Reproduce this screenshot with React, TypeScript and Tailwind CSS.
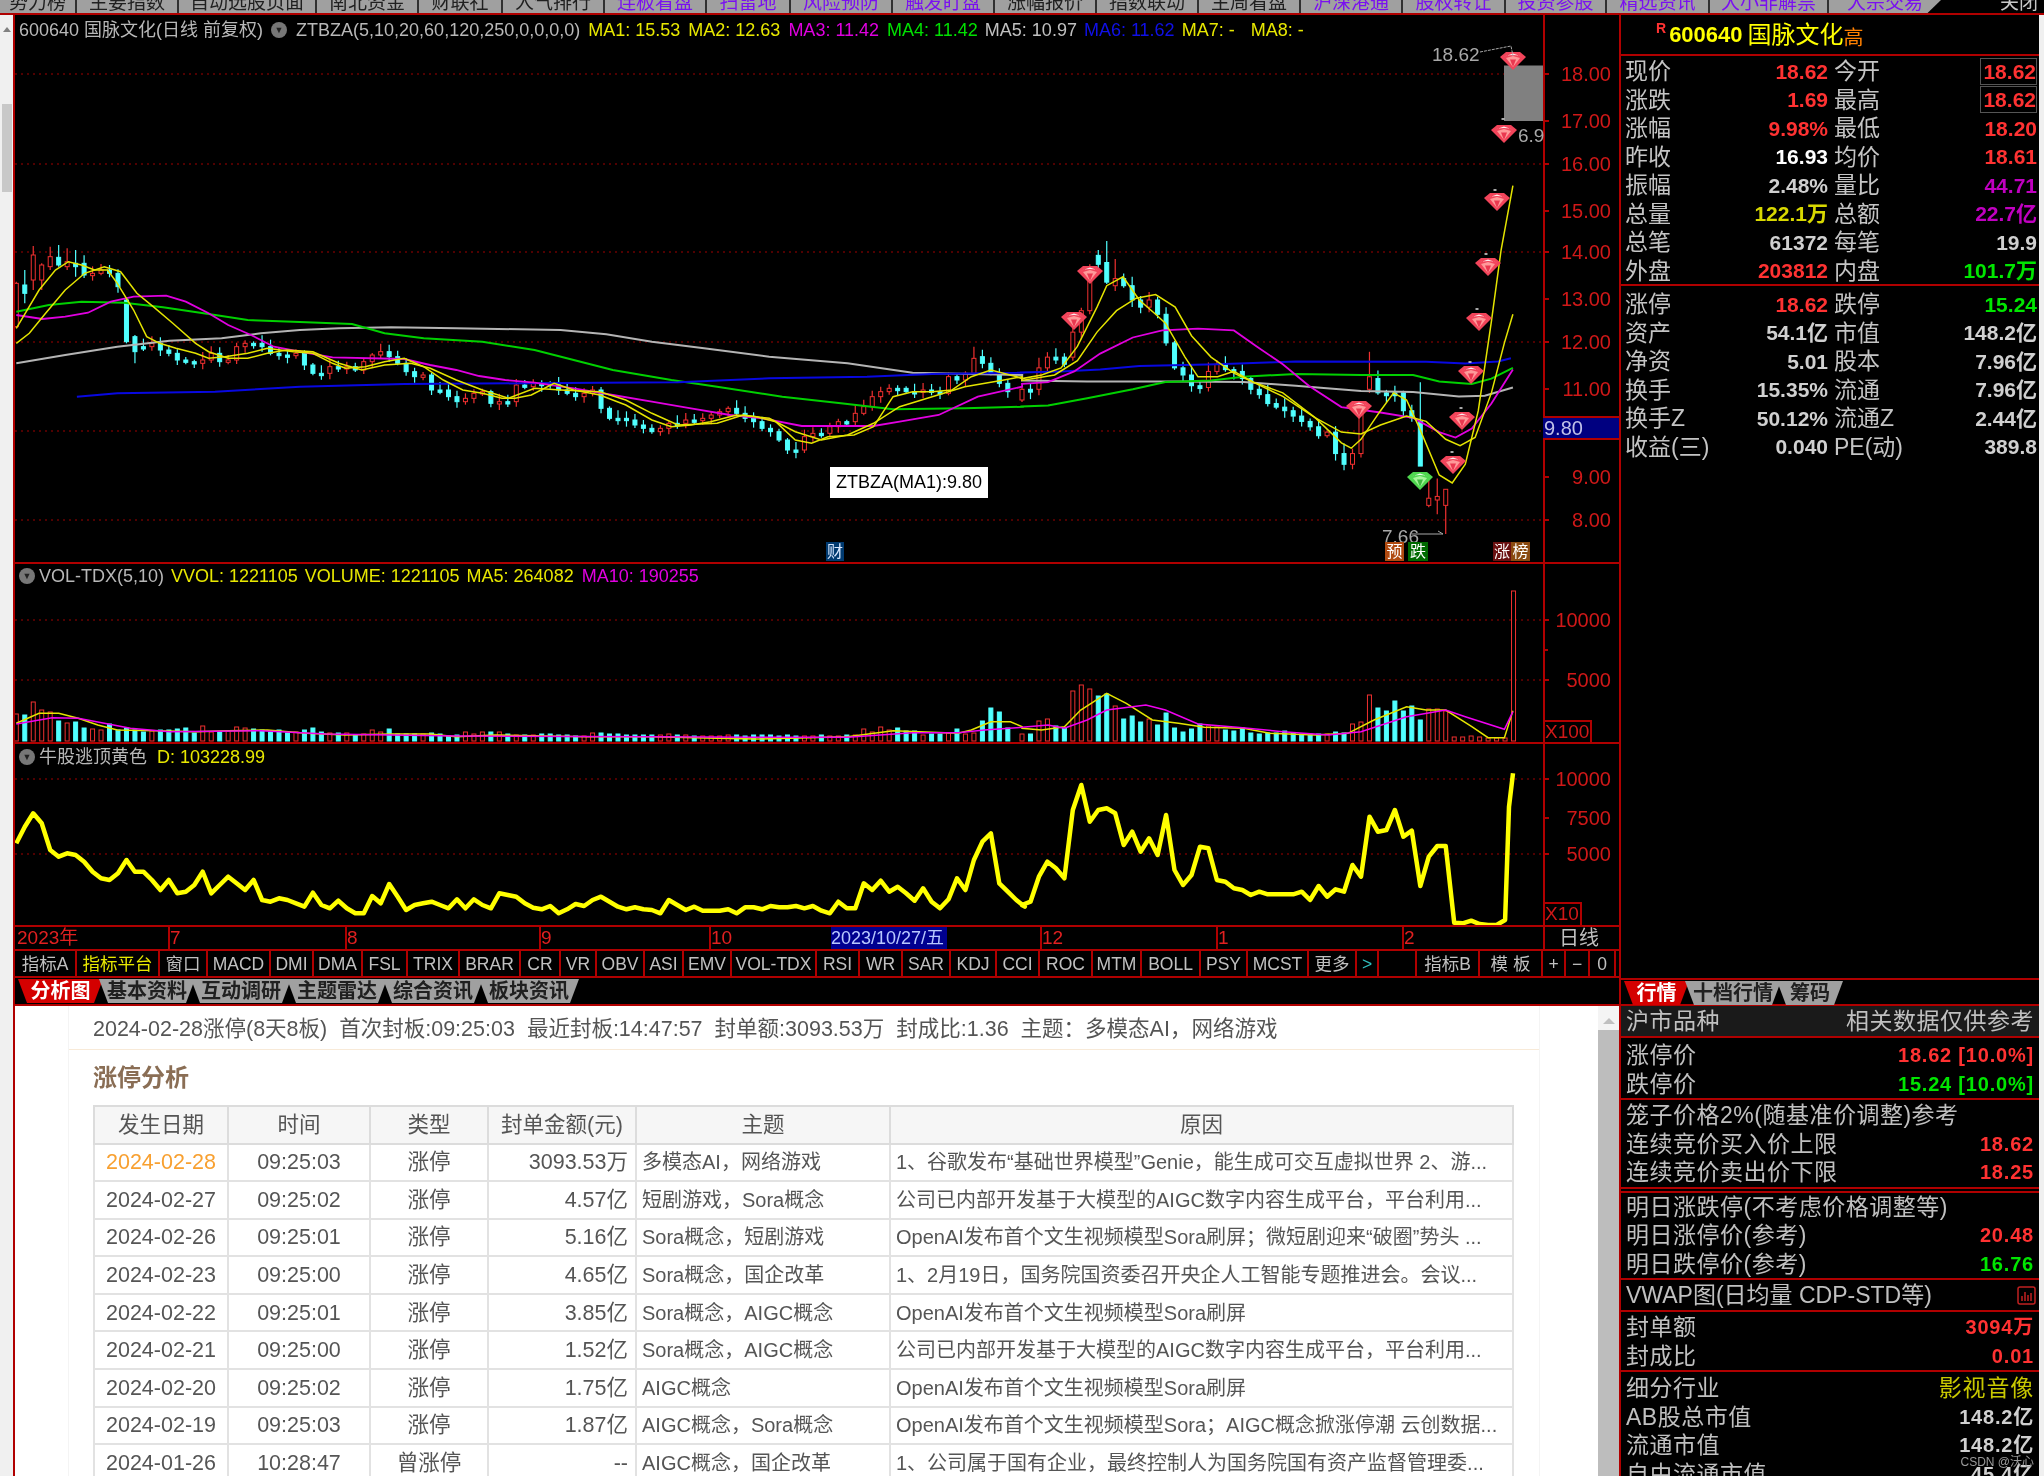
import React from "react";

const CJK = "font-['Liberation_Sans','Noto_Sans_CJK_SC',sans-serif]";
const RED = "#b00000";

type P = [number, number];
const L = (a: number[]): P[] => { const o: P[] = []; for (let i = 0; i < a.length; i += 2) o.push([a[i] / 1.534, a[i + 1] / 3]); return o; };
const R = (a: number[]): P[] => { const o: P[] = []; for (let i = 0; i < a.length; i += 2) o.push([1022 + a[i] / 1.534, a[i + 1] / 2.8]); return o; };
const pts = (p: P[]) => p.map(([x, y]) => `${x.toFixed(1)},${y.toFixed(1)}`).join(" ");

const ma1 = [...L([25,985,60,870,85,810,105,785,125,795,145,810,165,810,180,850,205,930,225,1010,245,1030,270,1045,300,1060,320,1075,345,1070,380,1060,410,1045,430,1050,450,1055,480,1060,510,1090,530,1105,560,1100,590,1085,620,1075,650,1100,680,1140,710,1170,740,1180,770,1195,790,1195,815,1185,850,1150,880,1170,920,1185,960,1215,1000,1260,1030,1280,1060,1275,1090,1265,1130,1245,1160,1250,1190,1265,1220,1320,1245,1330,1270,1310,1310,1305,1340,1280,1370,1190,1400,1175,1430,1175,1460,1170,1490,1130,1520,1110,1560,1130]),
  ...R([0,1060,30,1050,60,1030,85,970,115,860,130,800,155,775,180,840,205,880,220,905,250,1000,270,1055,300,1055,325,1040,355,1070,400,1100,450,1170,490,1240,505,1255,520,1230,550,1150,570,1100,590,1120,610,1200,640,1330,660,1352,680,1300,700,1150,720,900,735,700,753,520])];
const ma2 = [...L([25,1030,45,1000,70,940,100,870,130,820,160,800,185,815,210,880,235,920,265,970,300,1030,320,1055,350,1075,380,1075,410,1060,440,1050,480,1055,520,1090,555,1110,590,1095,630,1090,660,1105,700,1140,740,1170,780,1195,820,1165,860,1170,920,1175,960,1200,1000,1240,1040,1275,1100,1270,1140,1245,1180,1255,1220,1295,1260,1320,1300,1305,1340,1270,1380,1220,1430,1190,1480,1160,1540,1140,1568,1130]),
  ...R([0,1065,50,1050,85,1010,115,930,145,870,175,835,205,825,235,860,260,940,290,1000,325,1045,360,1075,400,1110,450,1170,490,1210,520,1215,550,1190,590,1165,620,1180,650,1230,672,1248,695,1225,720,1100,740,960,753,880])];
const ma3 = [...L([25,945,65,957,100,950,135,938,170,905,205,890,255,887,285,905,320,940,350,975,385,1005,420,1040,460,1055,510,1072,620,1077,660,1095,700,1110,735,1128,775,1140,820,1148,880,1165,940,1185,1000,1205,1060,1225,1120,1245,1170,1255,1230,1278,1340,1278,1380,1265,1440,1245,1500,1190,1568,1160]),
  ...R([0,1075,40,1070,80,1040,120,990,170,945,215,925,270,920,325,925,360,970,400,1020,440,1080,490,1140,550,1155,600,1170,640,1210,665,1225,690,1200,720,1130,753,1035])];
const ma4 = [...L([25,935,75,915,125,905,190,908,250,922,320,942,380,960,470,967,540,972,590,1000,650,1015,740,1025,820,1050,880,1080,940,1110,1030,1140,1100,1160,1200,1190,1290,1210,1370,1228,1480,1225,1568,1220]),
  ...R([0,1138,40,1135,100,1115,170,1090,220,1070,290,1065,340,1055,420,1047,520,1050,600,1050,640,1068,690,1075,720,1060,753,1030])];
const ma5 = [...L([25,1090,100,1065,180,1040,260,1022,340,1015,400,1000,460,990,520,985,600,982,700,985,860,990,930,1003,1000,1025,1080,1045,1180,1070,1300,1090,1400,1118,1568,1125]),
  ...R([0,1065,100,1068,240,1068,340,1070,420,1080,520,1095,600,1098,670,1110,710,1108,753,1085])];
const ma6 = [...L([118,1190,180,1180,330,1175,460,1160,620,1152,800,1150,1040,1147,1180,1135,1330,1130,1430,1122,1568,1118]),
  ...R([0,1043,60,1040,120,1035,180,1025,300,1020,420,1012,620,1013,680,1018,730,1012,750,1003])];

const leftC = [920,860,790,810,785,780,790,790,825,820,810,820,860,960,1040,1040,1030,1050,1060,1080,1085,1090,1080,1060,1085,1080,1040,1030,1030,1040,1060,1065,1065,1060,1095,1120,1120,1100,1105,1100,1110,1085,1065,1055,1070,1090,1115,1130,1125,1170,1170,1190,1205,1195,1180,1175,1210,1205,1205,1155,1160,1150,1150,1155,1170,1180,1190,1180,1170,1225,1255,1255,1260,1275,1285,1295,1285,1270,1270,1260,1260,1255,1245,1235,1225,1240,1255,1265,1285,1295,1320,1350,1350,1310,1300,1300,1280,1265,1265,1240,1220,1190,1175,1165,1165,1175,1175,1170,1175,1180,1130,1140,1120,1070,1090,1120,1150,1175];
const rightC = [1090,1090,1030,1000,1000,1020,930,870,800,730,740,780,800,840,860,840,880,960,1030,1050,1080,1085,1040,1020,1035,1040,1060,1090,1105,1130,1140,1150,1165,1180,1195,1220,1210,1270,1300,1270,1150,1060,1100,1100,1100,1150,1170,1230,1400,1380,1400];
const over: Record<number, number[]> = { 47: [1180, 1305, 1070, 1305, 0], 48: [1395, 1415, 1340, 1420, 1], 49: [1390, 1400, 1340, 1440, 1], 50: [1370, 1415, 1370, 1495, 1], 41: [1055, 1090, 985, 1100, 1], 6: [930, 1000, 890, 1010, 1], 8: [780, 870, 740, 880, 1], 9: [715, 740, 700, 770, 0], 10: [735, 790, 675, 795, 0], 11: [780, 800, 725, 815, 1] };
const overL: Record<number, number[]> = { 0: [850, 980, 845, 985, 1], 1: [855, 880, 810, 910, 0], 2: [765, 840, 738, 870, 1], 3: [795, 840, 790, 870, 1], 4: [770, 800, 740, 810, 1], 5: [772, 795, 735, 800, 0], 6: [785, 800, 745, 810, 1], 7: [790, 800, 750, 830, 0], 13: [900, 1025, 895, 1030, 0], 14: [1010, 1055, 1005, 1090, 0], 113: [1075, 1120, 1040, 1125, 1] };

type C = { x: number; top: number; bot: number; hi: number; lo: number; up: boolean };
const candles: C[] = [];
leftC.forEach((c, i) => {
  const p = i ? leftC[i - 1] : c + 40;
  const o = overL[i];
  const up = o ? o[4] === 1 : c < p;
  const t = o ? o[0] : Math.min(c, p), b = o ? o[1] : Math.max(Math.max(c, p), t + 7);
  candles.push({ x: (25 + 13 * i) / 1.534, top: t / 3, bot: b / 3, hi: o ? o[2] / 3 : t / 3 - ((i * 13) % 7) - 2, lo: o ? o[3] / 3 : b / 3 + ((i * 17) % 5) + 2, up });
});
rightC.forEach((c, j) => {
  const p = j ? rightC[j - 1] : c + 30;
  const o = over[j];
  const up = o ? o[4] === 1 : c < p;
  const t = o ? o[0] : Math.min(c, p), b = o ? o[1] : Math.max(Math.max(c, p), t + 8);
  candles.push({ x: 1022 + (13 * j) / 1.534, top: t / 2.8, bot: b / 2.8, hi: o ? o[2] / 2.8 : t / 2.8 - ((j * 13) % 9) - 2, lo: o ? o[3] / 2.8 : b / 2.8 + ((j * 17) % 6) + 2, up });
});

const volL = [27,26,39,31,29,20,18,19,13,12,11,17,11,13,11,9,10,11,11,12,13,8,15,9,9,10,14,13,12,11,9,11,8,9,11,13,9,8,8,8,6,7,11,9,12,7,7,7,7,8,7,5,6,9,7,9,9,9,7,6,6,6,7,7,6,6,5,5,8,8,7,7,6,6,6,6,6,7,6,6,5,5,5,5,6,6,5,6,6,6,5,6,5,5,5,6,5,5,6,6,12,9,14,11,13,10,10,6,7,7,8,12,7,8,20,33,29,13,12,8];
const volR = [7,7,20,22,15,13,50,56,52,45,47,35,22,25,19,22,16,28,13,9,12,17,15,14,11,10,13,8,7,8,8,10,8,7,7,7,7,9,8,17,19,46,33,30,40,30,35,21,32,32,30,4,4,5,4,3,3,3,150];
const vols = [...leftC.map((_, i) => ({ x: (25 + 13 * i) / 1.534, h: volL[i] ?? 6, up: candles[i].up })), ...volR.map((h, j) => ({ x: 1022 + (13 * j) / 1.534, h, up: j < rightC.length ? candles[leftC.length + j].up : true }))];

const volMa5 = [...L([25,550,60,520,90,520,120,535,150,555,180,570,240,572,300,575,350,572,410,570,470,580,530,585,600,582,660,582,700,590,760,585,900,590,1000,590,1100,595,1160,597,1300,590,1370,572,1470,580,1490,570,1520,545,1550,545,1568,560]).map(([x, y]): P => [x, y + 540]),
  ...[0,565,30,570,65,560,90,510,130,460,160,490,200,540,240,550,280,562,340,565,380,580,450,585,500,580,540,540,590,500,620,510,650,510,690,560,715,593,740,593,753,512].reduce<P[]>((o, v, i, a) => i % 2 ? o : [...o, [1022 + v / 1.534, 540 + a[i + 1] / 3]], [])];
const volMa10 = [...L([25,552,80,533,120,535,160,550,200,565,260,575,400,572,500,582,700,588,1000,590,1160,592,1300,592,1400,578,1470,578,1510,570,1568,562]).map(([x, y]): P => [x, y + 540]),
  ...[0,562,40,555,65,565,100,540,130,510,190,495,220,510,270,552,330,562,400,575,470,585,520,575,590,530,650,510,680,530,740,568,753,515].reduce<P[]>((o, v, i, a) => i % 2 ? o : [...o, [1022 + v / 1.534, 540 + a[i + 1] / 3]], [])];

const subL = [910,860,820,850,930,950,940,945,965,995,1015,1020,1000,960,995,995,1020,1050,1020,1060,1055,1035,995,1060,1035,1010,1030,1050,1020,1080,1085,1075,1080,1090,1100,1058,1095,1105,1082,1105,1120,1120,1068,1090,1032,1070,1110,1095,1090,1085,1095,1105,1078,1105,1078,1095,1105,1060,1065,1070,1090,1103,1108,1098,1120,1108,1092,1098,1080,1070,1085,1100,1108,1102,1108,1110,1120,1080,1095,1110,1100,1112,1112,1112,1108,1120,1102,1102,1108,1098,1102,1102,1098,1105,1098,1112,1120,1085,1105,1105,1030,1050,1022,1055,1040,1060,1082,1045,1085,1105,1078,1015,1050,960,905,880,1030,1055,1080,1100];
const subR = [1095,1085,1010,965,985,1015,810,735,845,810,805,820,915,875,935,895,945,825,990,1035,1005,920,925,1020,1025,1045,1050,1065,1055,1063,1063,1063,1063,1055,1080,1038,1070,1048,1055,975,1010,830,875,870,810,890,872,1038,950,918,918,1148,1150,1142,1152,1155,1155,1140];
const subLine: P[] = [...subL.map((y, i): P => [(25 + 13 * i) / 1.534, 540 + y / 3]), ...subR.map((y, j): P => [1022 + (13 * j) / 1.534, 540 + y / 3]), [1022 + 747 / 1.534, 540 + 800 / 3], [1513, 540 + 700 / 3]];

const Diamond = ({ x, y, green }: { x: number; y: number; green?: boolean }) => {
  const a = green ? "#4fd64f" : "#f2445a";
  const b = green ? "#a6f59a" : "#ff9a9a";
  const c = green ? "#3fb83f" : "#ea3850";
  return (
    <g>
      <polygon points={`${x - 13},${y + 5} ${x - 7},${y} ${x + 7},${y} ${x + 13},${y + 5} ${x},${y + 18}`} fill={a} />
      <polygon points={`${x - 10},${y + 5} ${x},${y + 1.5} ${x + 10},${y + 5} ${x + 6},${y + 3.5} ${x},${y + 3} ${x - 6},${y + 3.5}`} fill="#fff" opacity={0.9} />
      <polygon points={`${x - 7},${y + 6} ${x},${y + 4} ${x + 7},${y + 6} ${x},${y + 15}`} fill={b} />
      <polygon points={`${x - 3},${y + 7.5} ${x + 3},${y + 7.5} ${x},${y + 15}`} fill={c} />
    </g>
  );
};

const Dots = ({ y }: { y: number }) => <line x1={15} x2={1543} y1={y} y2={y} stroke="#a00000" strokeWidth={1} strokeDasharray="2 4" />;
const Axis = ({ y, t }: { y: number; t: string }) => (
  <g>
    <line x1={1543} x2={1549} y1={y} y2={y} stroke={RED} strokeWidth={2} />
    <text x={1611} y={y + 7} textAnchor="end" fill="#d01818" fontSize={20} fontFamily="Liberation Sans">{t}</text>
  </g>
);

const topTabs: [string, number, boolean][] = [
  ["势力榜", 77, false], ["主要指数", 102, false], ["自动选股页面", 138, false], ["南北资金", 102, false], ["财联社", 84, false], ["人气排行", 102, false],
  ["连板看盘", 102, true], ["扫雷地", 84, true], ["风险预防", 102, true], ["触发盯盘", 102, true], ["涨幅报价", 102, false], ["指数联动", 102, false], ["主周看盘", 102, false],
  ["沪深港通", 102, true], ["股权转让", 103, true], ["投资参股", 101, true], ["精选资讯", 103, true], ["大小非解禁", 119, true],
];

const infoA: [string, string, string, string, string, string][] = [
  ["现价", "18.62", "text-[#ff3232]", "今开", "18.62", "text-[#ff3232]"],
  ["涨跌", "1.69", "text-[#ff3232]", "最高", "18.62", "text-[#ff3232]"],
  ["涨幅", "9.98%", "text-[#ff3232]", "最低", "18.20", "text-[#ff3232]"],
  ["昨收", "16.93", "text-white", "均价", "18.61", "text-[#ff3232]"],
  ["振幅", "2.48%", "text-[#d0d0d0]", "量比", "44.71", "text-[#c000c0]"],
  ["总量", "122.1万", "text-[#d8d800]", "总额", "22.7亿", "text-[#c000c0]"],
  ["总笔", "61372", "text-[#d0d0d0]", "每笔", "19.9", "text-[#d0d0d0]"],
  ["外盘", "203812", "text-[#ff3232]", "内盘", "101.7万", "text-[#00e600]"],
];
const infoB: [string, string, string, string, string, string][] = [
  ["涨停", "18.62", "text-[#ff3232]", "跌停", "15.24", "text-[#00e600]"],
  ["资产", "54.1亿", "text-[#d0d0d0]", "市值", "148.2亿", "text-[#d0d0d0]"],
  ["净资", "5.01", "text-[#d0d0d0]", "股本", "7.96亿", "text-[#d0d0d0]"],
  ["换手", "15.35%", "text-[#d0d0d0]", "流通", "7.96亿", "text-[#d0d0d0]"],
  ["换手Z", "50.12%", "text-[#d0d0d0]", "流通Z", "2.44亿", "text-[#d0d0d0]"],
  ["收益(三)", "0.040", "text-[#d0d0d0]", "PE(动)", "389.8", "text-[#d0d0d0]"],
];

const InfoRow = ({ r, box }: { r: string[]; box: boolean }) => (
  <div className="grid h-[28.5px] grid-cols-[207px_1fr] items-center">
    <div className="flex items-center justify-between pl-[4px]">
      <span className="text-[23px] text-[#c4c4c4] whitespace-nowrap">{r[0]}</span>
      <span className={`text-[21px] font-bold ${r[2]}`}>{r[1]}</span>
    </div>
    <div className="flex items-center justify-between pl-[6px] pr-[2px]">
      <span className="text-[23px] text-[#c4c4c4] whitespace-nowrap">{r[3]}</span>
      <span className={`text-[21px] font-bold ${r[5]} ${box ? "border border-[#555] pl-[2px] leading-[25px]" : ""}`}>{r[4]}</span>
    </div>
  </div>
);

const btnsA: [string, number, string][] = [
  ["指标A", 62, ""], ["指标平台", 83, "text-[#e8e800]"], ["窗口", 48, ""], ["MACD", 63, ""], ["DMI", 43, ""], ["DMA", 49, ""], ["FSL", 45, ""], ["TRIX", 52, ""], ["BRAR", 61, ""], ["CR", 40, ""], ["VR", 36, ""], ["OBV", 48, ""], ["ASI", 39, ""], ["EMV", 48, ""], ["VOL-TDX", 85, ""], ["RSI", 43, ""], ["WR", 43, ""], ["SAR", 48, ""], ["KDJ", 46, ""], ["CCI", 43, ""], ["ROC", 53, ""], ["MTM", 49, ""], ["BOLL", 59, ""], ["PSY", 47, ""], ["MCST", 61, ""], ["更多", 48, ""], [">", 22, "text-[#30c0c0]"], ["", 38, ""], ["指标B", 63, ""], ["模 板", 63, ""], ["+", 23, ""], ["−", 24, ""], ["0", 26, ""],
];

const Tab = ({ t, w, active }: { t: string; w: number; active?: boolean }) => (
  <div style={{ width: w }} className={`-mr-[4px] flex h-[24px] shrink-0 items-center justify-center font-bold text-[20px] [clip-path:polygon(0_0,100%_0,calc(100%-9px)_100%,9px_100%)] ${active ? "bg-[#d40000] text-white" : "bg-[#a0a0a0] text-[#202020]"}`}>{t}</div>
);

const rows = [
  ["2024-02-28", "09:25:03", "涨停", "3093.53万", "多模态AI，网络游戏", "1、谷歌发布“基础世界模型”Genie，能生成可交互虚拟世界 2、游..."],
  ["2024-02-27", "09:25:02", "涨停", "4.57亿", "短剧游戏，Sora概念", "公司已内部开发基于大模型的AIGC数字内容生成平台，平台利用..."],
  ["2024-02-26", "09:25:01", "涨停", "5.16亿", "Sora概念，短剧游戏", "OpenAI发布首个文生视频模型Sora刷屏；微短剧迎来“破圈”势头 ..."],
  ["2024-02-23", "09:25:00", "涨停", "4.65亿", "Sora概念，国企改革", "1、2月19日，国务院国资委召开央企人工智能专题推进会。会议..."],
  ["2024-02-22", "09:25:01", "涨停", "3.85亿", "Sora概念，AIGC概念", "OpenAI发布首个文生视频模型Sora刷屏"],
  ["2024-02-21", "09:25:00", "涨停", "1.52亿", "Sora概念，AIGC概念", "公司已内部开发基于大模型的AIGC数字内容生成平台，平台利用..."],
  ["2024-02-20", "09:25:02", "涨停", "1.75亿", "AIGC概念", "OpenAI发布首个文生视频模型Sora刷屏"],
  ["2024-02-19", "09:25:03", "涨停", "1.87亿", "AIGC概念，Sora概念", "OpenAI发布首个文生视频模型Sora；AIGC概念掀涨停潮 云创数据..."],
  ["2024-01-26", "10:28:47", "曾涨停", "--", "AIGC概念，国企改革", "1、公司属于国有企业，最终控制人为国务院国有资产监督管理委..."],
];

const Th = ({ children }: { children: React.ReactNode }) => <th className="h-[37.5px] border-2 border-[#dcdcdc] bg-[#f6f6f6] p-0 text-center font-normal">{children}</th>;

const KV = ({ k, v, c }: { k: string; v?: string; c?: string }) => (
  <div className="flex h-[28.5px] items-center justify-between pl-[5px] pr-[5px]">
    <span className="text-[23px] tracking-[0.5px] text-[#c0c0c0] whitespace-nowrap">{k}</span>
    {v ? <span className={`text-[20px] font-bold tracking-[0.8px] ${c ?? "text-[#d0d0d0]"}`}>{v}</span> : null}
  </div>
);

export default function App() {
  return (
    <div className={`${CJK} relative flex h-[1476px] w-[2044px] flex-col overflow-hidden bg-[#f0f0f0] blur-[0.5px]`}>
      {/* top tab strip */}
      <div className="flex h-[15px] shrink-0 border-b-2 border-[#b00000] bg-black">
        {topTabs.map(([t, w, p]) => (
          <div key={t} style={{ width: w }} className={`h-[13px] shrink-0 overflow-hidden border-r-2 border-[#303030] bg-[#a0a0a0] text-center text-[19px] leading-[5px] whitespace-nowrap ${p ? "text-[#7a10f0]" : "text-[#202020]"}`}>{t}</div>
        ))}
        <div className="h-[13px] w-[112px] shrink-0 overflow-hidden bg-[#a0a0a0] text-center text-[19px] leading-[5px] text-[#7a10f0] [clip-path:polygon(0_0,100%_0,88%_100%,0_100%)]">大宗交易</div>
        <div className="flex h-[13px] flex-1 justify-end overflow-hidden pr-[6px] text-[19px] leading-[5px] text-[#c8c8c8]">关闭</div>
      </div>

      <div className="flex min-h-0 flex-1">
        {/* left scroll strip */}
        <div className="flex w-[13px] shrink-0 flex-col items-center bg-[#f0f0f0]">
          <div className="mt-[12px] h-0 w-0 border-x-[4px] border-b-[5px] border-x-transparent border-b-[#808080]" />
          <div className="mt-[72px] h-[88px] w-[10px] bg-[#c8c8c8]" />
        </div>

        {/* center column */}
        <div className="flex w-[1606px] shrink-0 flex-col border-l-2 border-[#b00000] bg-black">
          {/* main chart */}
          <div className="relative flex h-[549px] shrink-0 border-b-2 border-[#b00000]">
            <div className="flex-1" />
            <div className="w-[76px] shrink-0 border-l-2 border-[#b00000]" />
            <svg className="absolute inset-0 h-full w-full" viewBox="15 15 1604 547">
              {[74, 164, 252, 342, 431, 520].map((y) => <Dots key={y} y={y} />)}
              <rect x={1504} y={65.5} width={39} height={55.5} fill="#808080" />
              {[["18.00", 74], ["17.00", 121], ["16.00", 164], ["15.00", 211], ["14.00", 252], ["13.00", 299], ["12.00", 342], ["11.00", 389], ["9.00", 477], ["8.00", 520]].map(([t, y]) => <Axis key={t as string} t={t as string} y={y as number} />)}
              {candles.map((c, i) => (
                <g key={i}>
                  <line x1={c.x} x2={c.x} y1={c.hi} y2={c.lo} stroke={c.up ? "#f03030" : "#50ffff"} strokeWidth={1.2} />
                  <rect x={c.x - 2} y={c.top} width={4} height={Math.max(c.bot - c.top, 2)} fill={c.up ? "#000" : "#50ffff"} stroke={c.up ? "#f03030" : "#50ffff"} strokeWidth={1} />
                </g>
              ))}
              <polyline points={pts(ma5)} fill="none" stroke="#b4b4b4" strokeWidth={2} />
              <polyline points={pts(ma4)} fill="none" stroke="#00d000" strokeWidth={2} />
              <polyline points={pts(ma6)} fill="none" stroke="#0808e0" strokeWidth={2} />
              <polyline points={pts(ma3)} fill="none" stroke="#e000e0" strokeWidth={1.8} />
              <polyline points={pts(ma2)} fill="none" stroke="#e4e400" strokeWidth={1.5} />
              <polyline points={pts(ma1)} fill="none" stroke="#e4e400" strokeWidth={1.5} />
              {[[1513, 52], [1504, 125], [1497, 193], [1488, 258], [1479, 313], [1471, 366], [1462, 412], [1453, 456], [1359, 401], [1090, 266], [1074, 312]].map(([x, y]) => <Diamond key={x} x={x} y={y} />)}
              <Diamond x={1420} y={472} green />
              {[[1503, 119], [1495, 190], [1486, 254], [1477, 309], [1470, 362], [1461, 408], [1452, 452]].map(([x, y]) => <line key={x} x1={x - 1.5} x2={x + 1.5} y1={y} y2={y} stroke="#e0e0e0" strokeWidth={1.5} />)}
              <text x={1432} y={61} fill="#a8a8a8" fontSize={19} fontFamily="Liberation Sans">18.62</text>
              <polyline points="1480,52 1511,46 1513,56" fill="none" stroke="#a8a8a8" strokeWidth={1} strokeDasharray="3 1" />
              <text x={1518} y={142} fill="#a8a8a8" fontSize={19} fontFamily="Liberation Sans">6.9</text>
              <text x={1382} y={543} fill="#a8a8a8" fontSize={19} fontFamily="Liberation Sans">7.66</text>
              <polyline points="1412,534 1443,534 1438,531" fill="none" stroke="#a8a8a8" strokeWidth={1} />
            </svg>
            {/* chart legend */}
            <div className="absolute left-[4px] top-[5px] flex items-center whitespace-nowrap text-[18px] leading-[20px] text-[#b8b8b8]">
              <span>600640 国脉文化(日线 前复权)</span>
              <span className="ml-[8px] mr-[9px] flex h-[16px] w-[16px] items-center justify-center rounded-full bg-[#777] text-[9px] text-[#222]">▼</span>
              <span>ZTBZA(5,10,20,60,120,250,0,0,0,0)</span>
              <span className="ml-[8px] text-[#e8e800]">MA1: 15.53</span>
              <span className="ml-[8px] text-[#e8e800]">MA2: 12.63</span>
              <span className="ml-[8px] text-[#e000e0]">MA3: 11.42</span>
              <span className="ml-[8px] text-[#00e000]">MA4: 11.42</span>
              <span className="ml-[7px] text-[#c0c0c0]">MA5: 10.97</span>
              <span className="ml-[7px] text-[#1010e8]">MA6: 11.62</span>
              <span className="ml-[7px] text-[#e8e800]">MA7: -</span>
              <span className="ml-[16px] text-[#e8e800]">MA8: -</span>
            </div>
            <div className="absolute left-[1528px] top-[401px] flex h-[24px] w-[76px] items-center border-y-2 border-[#b00000] bg-[#000080] pl-[1px] text-[20px] text-[#c0c0e8]">9.80</div>
            <div className="absolute left-[815px] top-[452px] flex h-[31px] w-[158px] items-center justify-center bg-white text-[18px] text-black">ZTBZA(MA1):9.80</div>
            <div className="absolute left-[811px] top-[527px] flex h-[19px] w-[18px] items-center justify-center bg-[#003a70] text-[16px] text-[#d8e8ff]">财</div>
            <div className="absolute left-[1370px] top-[527px] flex h-[19px] w-[19px] items-center justify-center bg-[#b04a10] text-[16px] text-white">预</div>
            <div className="absolute left-[1393px] top-[527px] flex h-[19px] w-[20px] items-center justify-center bg-[#006a00] text-[16px] text-white">跌</div>
            <div className="absolute left-[1478px] top-[527px] flex h-[19px] w-[18px] items-center justify-center bg-[#6a1010] text-[16px] text-white">涨</div>
            <div className="absolute left-[1496px] top-[527px] flex h-[19px] w-[19px] items-center justify-center bg-[#8a4a10] text-[16px] text-white">榜</div>
          </div>

          {/* volume */}
          <div className="relative flex h-[180px] shrink-0 border-b-2 border-[#b00000]">
            <div className="flex-1" />
            <div className="w-[76px] shrink-0 border-l-2 border-[#b00000]" />
            <svg className="absolute inset-0 h-full w-full" viewBox="15 564 1604 178">
              <Dots y={620} />
              <Dots y={680} />
              <Axis y={620} t="10000" />
              <Axis y={680} t="5000" />
              <line x1={1543} x2={1548} y1={650} y2={650} stroke={RED} strokeWidth={2} />
              {vols.map((v, i) => (
                <rect key={i} x={v.x - 2} y={741 - v.h} width={4} height={v.h} fill={v.up ? "#000" : "#50ffff"} stroke={v.up ? "#f03030" : "#50ffff"} strokeWidth={1} />
              ))}
              <polyline points={pts(volMa5)} fill="none" stroke="#e4e400" strokeWidth={1.5} />
              <polyline points={pts(volMa10)} fill="none" stroke="#f000f0" strokeWidth={1.5} />
            </svg>
            <div className="absolute left-[4px] top-[2px] flex items-center whitespace-nowrap text-[18px] leading-[20px] text-[#b8b8b8]">
              <span className="mr-[4px] flex h-[16px] w-[16px] items-center justify-center rounded-full bg-[#777] text-[9px] text-[#222]">▼</span>
              <span>VOL-TDX(5,10)</span>
              <span className="ml-[7px] text-[#e8e800]">VVOL: 1221105</span>
              <span className="ml-[7px] text-[#e8e800]">VOLUME: 1221105</span>
              <span className="ml-[7px] text-[#e8e800]">MA5: 264082</span>
              <span className="ml-[8px] text-[#e000e0]">MA10: 190255</span>
            </div>
            <div className="absolute bottom-0 left-[1528px] flex h-[22px] w-[49px] items-center border-l-2 border-r-2 border-t-2 border-[#b00000] text-[19px] text-[#d01818]">X100</div>
          </div>

          {/* indicator */}
          <div className="relative flex h-[183px] shrink-0 border-b-2 border-[#b00000]">
            <div className="flex-1" />
            <div className="w-[76px] shrink-0 border-l-2 border-[#b00000]" />
            <svg className="absolute inset-0 h-full w-full" viewBox="15 744 1604 181">
              <Dots y={779} />
              <Dots y={854} />
              <Axis y={779} t="10000" />
              <Axis y={818} t="7500" />
              <Axis y={854} t="5000" />
              <polyline points={pts(subLine)} fill="none" stroke="#ffff00" strokeWidth={4.5} strokeLinejoin="round" />
            </svg>
            <div className="absolute left-[4px] top-[3px] flex items-center whitespace-nowrap text-[18px] leading-[20px] text-[#b8b8b8]">
              <span className="mr-[4px] flex h-[16px] w-[16px] items-center justify-center rounded-full bg-[#777] text-[9px] text-[#222]">▼</span>
              <span>牛股逃顶黄色</span>
              <span className="ml-[10px] text-[#e8e800]">D: 103228.99</span>
            </div>
            <div className="absolute bottom-0 left-[1528px] flex h-[23px] w-[39px] items-center border-l-2 border-r-2 border-t-2 border-[#b00000] text-[19px] text-[#d01818]">X10</div>
          </div>

          {/* date axis */}
          <div className="flex h-[24px] shrink-0 items-stretch border-b-2 border-[#b00000] text-[19px] leading-[22px] text-[#e02020]">
            <div className="w-[153px] pl-[2px]">2023年</div>
            <div className="w-[177px] border-l-2 border-[#b00000]">7</div>
            <div className="w-[194px] border-l-2 border-[#b00000]">8</div>
            <div className="w-[170px] border-l-2 border-[#b00000]">9</div>
            <div className="w-[122px] border-l-2 border-[#b00000]">10</div>
            <div className="w-[116px] whitespace-nowrap bg-[#000090] text-[18px] text-[#b8c8ff]">2023/10/27/五</div>
            <div className="w-[93px]" />
            <div className="w-[176px] border-l-2 border-[#b00000]">12</div>
            <div className="w-[186px] border-l-2 border-[#b00000]">1</div>
            <div className="w-[141px] border-l-2 border-[#b00000]">2</div>
            <div className="flex-1 border-l-2 border-[#b00000] pr-[6px] text-center text-[20px] text-[#c0c0c0]">日线</div>
          </div>

          {/* indicator buttons */}
          <div className="flex h-[27px] shrink-0 border-b-2 border-[#b00000]">
            {btnsA.map(([t, w, c], i) => (
              <div key={i} style={{ width: w }} className={`flex shrink-0 items-center justify-center overflow-hidden border-r-2 border-[#b00000] pt-[2px] text-[17.5px] whitespace-nowrap ${c || "text-[#c0c0c0]"}`}>{t}</div>
            ))}
          </div>

          {/* tabs */}
          <div className="flex h-[28px] shrink-0 items-start border-b-2 border-[#b00000] pl-[3px] pt-[1px]">
            <Tab t="分析图" w={85} active />
            <Tab t="基本资料" w={96} />
            <Tab t="互动调研" w={100} />
            <Tab t="主题雷达" w={100} />
            <Tab t="综合资讯" w={100} />
            <Tab t="板块资讯" w={100} />
          </div>

          {/* white content */}
          <div className="flex min-h-0 flex-1 bg-white">
            <div className="w-[53px] shrink-0" />
            <div className="w-[1472px] shrink-0 border-x border-[#f4f4f4] text-[21.5px] text-[#555]">
              <div className="flex h-[44px] items-center gap-[12px] border-b border-[#f8ead8] pl-[24px] pt-[3px] whitespace-nowrap">
                <span>2024-02-28涨停(8天8板)</span><span>首次封板:09:25:03</span><span>最近封板:14:47:57</span><span>封单额:3093.53万</span><span>封成比:1.36</span><span>主题：多模态AI，网络游戏</span>
              </div>
              <div className="flex h-[55px] items-center pl-[24px] pt-[1px] text-[24px] font-bold text-[#8a6e55]">涨停分析</div>
              <table className="ml-[24px] w-[1421px] table-fixed border-collapse">
                <colgroup>
                  <col className="w-[134px]" /><col className="w-[142px]" /><col className="w-[118px]" /><col className="w-[148px]" /><col className="w-[254px]" /><col />
                </colgroup>
                <thead>
                  <tr><Th>发生日期</Th><Th>时间</Th><Th>类型</Th><Th>封单金额(元)</Th><Th>主题</Th><Th>原因</Th></tr>
                </thead>
                <tbody>
                  {rows.map((r, i) => (
                    <tr key={i}>
                      <td className={`h-[37.6px] border-2 border-[#e2e2e2] p-0 text-center ${i === 0 ? "text-[#f8a030]" : ""}`}>{r[0]}</td>
                      <td className="border-2 border-[#e2e2e2] p-0 text-center">{r[1]}</td>
                      <td className="border-2 border-[#e2e2e2] p-0 text-center">{r[2]}</td>
                      <td className="border-2 border-[#e2e2e2] p-0 pr-[7px] text-right">{r[3]}</td>
                      <td className="overflow-hidden border-2 border-[#e2e2e2] p-0 pl-[5px] text-[20px] whitespace-nowrap">{r[4]}</td>
                      <td className="overflow-hidden border-2 border-[#e2e2e2] p-0 pl-[5px] text-[20px] whitespace-nowrap">{r[5]}</td>
                    </tr>
                  ))}
                </tbody>
              </table>
            </div>
            <div className="flex-1" />
            <div className="flex w-[21px] shrink-0 flex-col items-center bg-[#f4f4f4]">
              <div className="mt-[12px] h-0 w-0 border-x-[6px] border-b-[6px] border-x-transparent border-b-[#c0c0c0]" />
              <div className="mt-[6px] w-full flex-1 bg-[#bdbdbd]" />
            </div>
          </div>
        </div>

        {/* right column */}
        <div className="flex w-[420px] shrink-0 flex-col border-l-2 border-[#b00000] bg-black">
          <div className="h-[963px] shrink-0">
            <div className="flex h-[41px] items-center border-b-2 border-[#b00000] pl-[35px]">
              <span className="-mt-[12px] mr-[3px] text-[14px] font-bold text-[#ff3232]">R</span>
              <span className="text-[22px] font-bold text-[#ffff00]">600640</span>
              <span className="ml-[5px] text-[24px] text-[#ffff00]">国脉文化</span>
              <span className="mt-[6px] text-[20px] text-[#ff8000]">高</span>
            </div>
            <div className="-mt-[2px] border-b-2 border-[#b00000] pb-[2px]">
              {infoA.map((r, i) => <InfoRow key={r[0]} r={r} box={i < 2} />)}
            </div>
            <div className="pt-[1px]">
              {infoB.map((r) => <InfoRow key={r[0]} r={r} box={false} />)}
            </div>
          </div>
          <div className="flex h-[28px] shrink-0 items-start border-y-2 border-[#b00000] pl-[3px] pt-[1px]">
            <Tab t="行情" w={65} active />
            <Tab t="十档行情" w={96} />
            <Tab t="筹码" w={66} />
          </div>
          <div className="relative min-h-0 flex-1 overflow-hidden">
            <div className="flex h-[32px] items-center justify-between border-b-2 border-[#b00000] bg-[#1a1a1a] px-[5px] text-[23px] tracking-[0.5px] text-[#c0c0c0]">
              <span>沪市品种</span><span>相关数据仅供参考</span>
            </div>
            <div className="border-b-2 border-[#b00000] pt-[3px]">
              <KV k="涨停价" v="18.62 [10.0%]" c="text-[#ff3232]" />
              <KV k="跌停价" v="15.24 [10.0%]" c="text-[#00e600]" />
            </div>
            <div className="border-b-2 border-[#b00000] pt-[1px]">
              <KV k="笼子价格2%(随基准价调整)参考" />
              <KV k="连续竞价买入价上限" v="18.62" c="text-[#ff3232]" />
              <KV k="连续竞价卖出价下限" v="18.25" c="text-[#ff3232]" />
            </div>
            <div className="mt-[2px] border-b-2 border-t-2 border-[#b00000]">
              <KV k="明日涨跌停(不考虑价格调整等)" />
              <KV k="明日涨停价(参考)" v="20.48" c="text-[#ff3232]" />
              <KV k="明日跌停价(参考)" v="16.76" c="text-[#00e600]" />
            </div>
            <div className="flex h-[32px] items-center justify-between border-b-2 border-[#b00000] pl-[5px] pr-[3px]">
              <span className="text-[23px] text-[#c0c0c0]">VWAP图(日均量 CDP-STD等)</span>
              <svg width="19" height="19" viewBox="0 0 19 19" fill="none" stroke="#c02020" strokeWidth="1.5"><rect x="1" y="1" width="17" height="17" rx="2" /><path d="M5 15V10M8 15V6M11 15V9M14 15V7" /></svg>
            </div>
            <div className="border-b-2 border-[#b00000] pt-[1px]">
              <KV k="封单额" v="3094万" c="text-[#ff3232]" />
              <KV k="封成比" v="0.01" c="text-[#ff3232]" />
            </div>
            <div className="pt-[2px]">
              <KV k="细分行业" v="影视音像" c="text-[#c8c800] !font-normal !text-[23px]" />
              <KV k="AB股总市值" v="148.2亿" />
              <KV k="流通市值" v="148.2亿" />
              <KV k="自由流通市值" v="45.4亿" />
            </div>
            <div className="absolute bottom-[5px] right-[5px] text-[12px] text-[#9a9a9a]">CSDN @沃心</div>
          </div>
        </div>

        <div className="flex-1 bg-[#f0f0f0]" />
      </div>
    </div>
  );
}
